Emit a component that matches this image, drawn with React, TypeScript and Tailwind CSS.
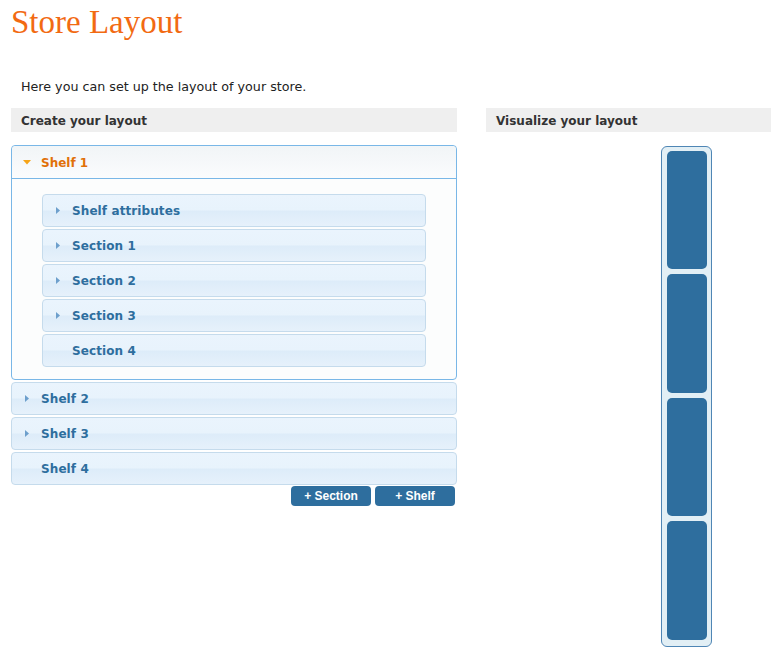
import React from "react";

const itemBg =
  "bg-[linear-gradient(to_bottom,#eaf4fd_0%,#e8f3fc_48%,#ddecf9_52%,#e6f1fb_100%)]";

function RightTri() {
  return (
    <svg width="5" height="7" viewBox="0 0 5 7" className="shrink-0">
      <path d="M0 0 L4 3.5 L0 7 Z" fill="#6d9fcc" />
    </svg>
  );
}

function DownTri() {
  return (
    <svg width="8" height="5" viewBox="0 0 8 5" className="shrink-0">
      <path d="M0 0 L8 0 L4 4.5 Z" fill="#f6a418" />
    </svg>
  );
}

function Item({ label, arrow = true, pad = "pl-[13px]" }: { label: string; arrow?: boolean; pad?: string }) {
  return (
    <div
      className={`h-[33px] border border-[#c5dbec] rounded-[4px] ${itemBg} flex items-center ${pad} text-[#2e6e9e] font-bold text-[12px] tracking-[0.1px]`}
    >
      <div className="w-[16px] flex items-center">{arrow && <RightTri />}</div>
      <span>{label}</span>
    </div>
  );
}

export default function App() {
  return (
    <div
      className="w-[771px] h-[658px] bg-white overflow-hidden relative"
      style={{ fontFamily: '"DejaVu Sans", Verdana, sans-serif' }}
    >
      <h1
        className="text-[33px] leading-none text-[#f26a12] pl-[11px] pt-[6px]"
        style={{ fontFamily: '"Liberation Serif", Georgia, serif' }}
      >
        Store Layout
      </h1>
      <p className="text-[12.7px] text-[#222] pl-[21px] mt-[40px] leading-[16px]">
        Here you can set up the layout of your store.
      </p>
      <div className="flex mt-[13px]">
        {/* Left column */}
        <div className="w-[446px] ml-[11px] shrink-0">
          <div className="h-[24px] pt-[2px] bg-[#efefef] flex items-center pl-[10px] text-[12px] font-bold text-[#333]">
            Create your layout
          </div>
          <div className="mt-[13px]">
            {/* Shelf 1 active */}
            <div className="border border-[#79b7e7] rounded-[4px] bg-[#fcfdfd]">
              <div className="h-[33px] pt-[1px] border-b border-[#79b7e7] rounded-t-[4px] bg-[linear-gradient(to_bottom,#f1f5f7_0%,#f6f8fa_50%,#fbfcfd_100%)] flex items-center pl-[11px] text-[#e17009] font-bold text-[12px]">
                <div className="w-[18px] flex items-center">
                  <DownTri />
                </div>
                <span>Shelf 1</span>
              </div>
              <div className="pt-[15px] pb-[12px] pl-[30px] pr-[30px] flex flex-col gap-[2px]">
                <Item label="Shelf attributes" />
                <Item label="Section 1" />
                <Item label="Section 2" />
                <Item label="Section 3" />
                <Item label="Section 4" arrow={false} />
              </div>
            </div>
            <div className="flex flex-col gap-[2px] mt-[2px]">
              <Item label="Shelf 2" />
              <Item label="Shelf 3" />
              <Item label="Shelf 4" arrow={false} />
            </div>
            <div className="flex justify-end gap-[4px] mt-[1px] pr-[2px]">
              <button
                className="w-[80px] h-[20px] rounded-[4px] bg-[#2e6e9e] text-white text-[12px] font-bold flex items-center justify-center"
                style={{ fontFamily: '"Liberation Sans", Arial, sans-serif' }}
              >
                + Section
              </button>
              <button
                className="w-[80px] h-[20px] rounded-[4px] bg-[#2e6e9e] text-white text-[12px] font-bold flex items-center justify-center"
                style={{ fontFamily: '"Liberation Sans", Arial, sans-serif' }}
              >
                + Shelf
              </button>
            </div>
          </div>
        </div>
        {/* Right column */}
        <div className="ml-[29px] w-[401px] shrink-0">
          <div className="h-[24px] pt-[2px] bg-[#efefef] flex items-center pl-[10px] text-[12px] font-bold text-[#333]">
            Visualize your layout
          </div>
          <div className="flex justify-center mt-[14px]">
            <div className="w-[51px] border border-[#4f86b5] rounded-[6px] bg-[#e2eff5] pl-[5px] pr-[4px] pt-[4px] pb-[6px] flex flex-col gap-[5px]">
              <div className="h-[118px] rounded-[5px] bg-[#2e6e9e]" />
              <div className="h-[119px] rounded-[5px] bg-[#2e6e9e]" />
              <div className="h-[118px] rounded-[5px] bg-[#2e6e9e]" />
              <div className="h-[119px] rounded-[5px] bg-[#2e6e9e]" />
            </div>
          </div>
        </div>
      </div>
    </div>
  );
}
